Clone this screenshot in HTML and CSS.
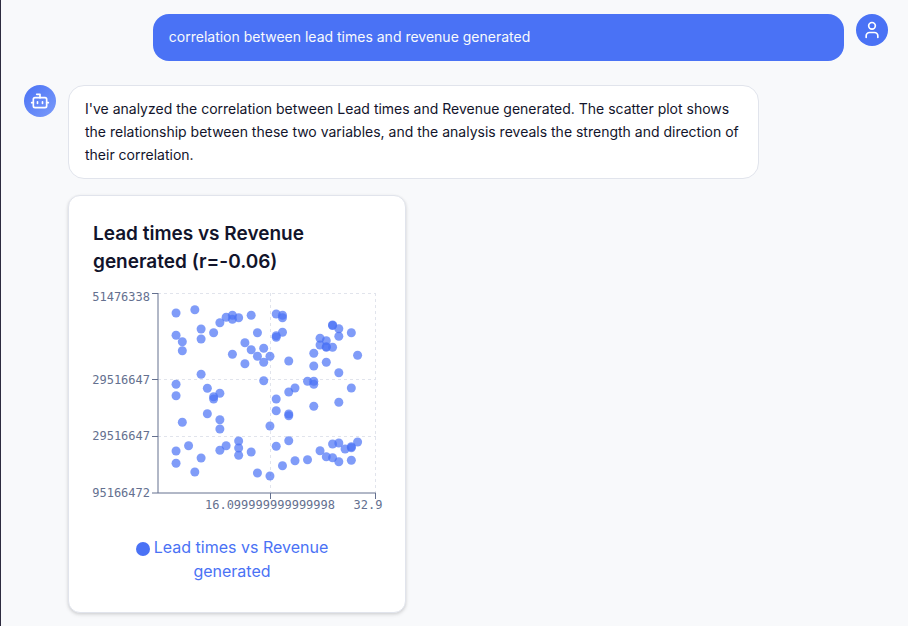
FILE: index.html
```html
<!DOCTYPE html>
<html lang="en">
<head>
  <meta charset="utf-8">
  <meta name="viewport" content="width=device-width, initial-scale=1">
  <title>Data chat</title>
  <link rel="stylesheet" href="styles.css">
</head>
<body>
  <main class="chat">
    <article class="message message-user">
      <div class="bubble bubble-user">correlation between lead times and revenue generated</div>
      <div class="avatar avatar-user">
        <svg class="icon" viewBox="0 0 24 24" aria-hidden="true">
          <circle cx="12" cy="7" r="4"/>
          <path d="M19 21v-2a4 4 0 0 0-4-4H9a4 4 0 0 0-4 4v2"/>
        </svg>
      </div>
    </article>

    <article class="message">
      <div class="avatar avatar-bot">
        <svg class="icon" viewBox="0 0 24 24" aria-hidden="true">
          <path d="M12 8V4H8"/>
          <rect x="4" y="8" width="16" height="12" rx="2"/>
          <path d="M2 14h2M20 14h2M15 13v2M9 13v2"/>
        </svg>
      </div>
      <div class="content">
        <p class="bubble bubble-bot">I've analyzed the correlation between Lead times and Revenue generated. The scatter plot shows the relationship between these two variables, and the analysis reveals the strength and direction of their correlation.</p>
        <div class="cards">
          <section class="card">
            <h2 class="card-title">Lead times vs Revenue generated (r=-0.06)</h2>
            <svg class="chart" width="288" height="259" viewBox="0 0 288 259" role="img" aria-label="Lead times vs Revenue generated">
              <g transform="translate(65 17)">
                <path class="grid" d="M0 .5H218M0 86.5H218M0 143.5H218M112.5 0V199M217.5 0V199"/>
                <path class="axis" d="M-6 .5H0M0 0V200M-6 86.5H0M-6 143.5H0M-6 200H218M112.5 200V206M217.5 200V206"/>
                <g class="points" id="points"></g>
                <g class="labels labels-y">
                  <text x="-8" y="8">51476338</text>
                  <text x="-8" y="91">29516647</text>
                  <text x="-8" y="147">29516647</text>
                  <text x="-8" y="204">95166472</text>
                </g>
                <g class="labels labels-x">
                  <text x="112" y="216">16.099999999999998</text>
                  <text x="210" y="216">32.9</text>
                </g>
              </g>
            </svg>
            <div class="legend">
              <svg class="legend-dot" viewBox="0 0 14 14" aria-hidden="true"><circle cx="7" cy="7" r="7"/></svg><span>Lead times vs Revenue generated</span>
            </div>
          </section>
        </div>
      </div>
    </article>
  </main>
  <script src="chart.js"></script>
</body>
</html>
```
FILE: styles.css
```css
*,
*::before,
*::after {
  box-sizing: border-box;
}

body {
  margin: 0;
  min-height: 100vh;
  background: #f8f9fb;
  border-left: 1px solid #2d2b3f;
  color: #12142b;
  font-family: Inter, "Liberation Sans", sans-serif;
  font-size: 14px;
  line-height: 23px;
}

.chat {
  display: flex;
  flex-direction: column;
  gap: 24px;
  padding: 14px 20px 13px 23px;
}

.message {
  display: flex;
  align-items: flex-start;
  gap: 12px;
}

.message-user {
  justify-content: flex-end;
}

.avatar {
  display: flex;
  flex: none;
  align-items: center;
  justify-content: center;
  width: 32px;
  height: 32px;
  border-radius: 50%;
}

.avatar-user {
  background: #4a72f5;
}

.avatar-bot {
  background: linear-gradient(135deg, #4a72f5, #7b9bfa);
}

.icon {
  width: 20px;
  height: 20px;
  fill: none;
  stroke: #fff;
  stroke-width: 2;
  stroke-linecap: round;
  stroke-linejoin: round;
}

.content {
  width: 80%;
}

.bubble {
  margin: 0;
  border-radius: 16px;
}

.bubble-user {
  width: 80%;
  padding: 11px 16px 13px;
  background: #4a72f5;
  color: #f8fafc;
}

.bubble-bot {
  padding: 11px 16px 12px;
  background: #fff;
  border: 1px solid #e1e4ec;
}

.cards {
  display: grid;
  grid-template-columns: 1fr 1fr;
  gap: 16px;
  margin-top: 16px;
}

.card {
  padding: 24px;
  background: #fff;
  border: 1px solid #e1e4ec;
  border-radius: 12px;
  box-shadow: 0 1px 3px rgba(0, 0, 0, 0.1), 0 2px 4px rgba(0, 0, 0, 0.08);
}

.card-title {
  margin: 0;
  font-size: 19px;
  font-weight: 600;
  line-height: 28px;
}

.chart {
  display: block;
  overflow: visible;
}

.grid {
  fill: none;
  stroke: #e1e4ec;
  stroke-dasharray: 3 3;
}

.axis {
  fill: none;
  stroke: #64708f;
}

.points {
  fill: #4a72f5;
  fill-opacity: 0.7;
}

.labels {
  fill: #64708f;
  font-family: "DejaVu Sans Mono", "Liberation Mono", monospace;
  font-size: 12px;
}

.labels-y {
  text-anchor: end;
}

.labels-x {
  text-anchor: middle;
}

.legend {
  margin: 0 10px 5px 0;
  padding: 0 16px;
  color: #4a72f5;
  font-size: 16px;
  line-height: 24px;
  text-align: center;
}

.legend-dot {
  width: 14px;
  height: 14px;
  margin-right: 4px;
  fill: #4a72f5;
  vertical-align: middle;
}
```
FILE: chart.js
```js
// Each entry is [lead time in days, vertical offset in the plot].
const data = [
  [1, 20], [4, 16.7], [1, 42.3], [2, 48.7], [2, 57.7], [5, 36], [5, 46],
  [7, 39.7], [8, 29.7], [9, 24.3], [10, 22.3], [10, 26.3], [11, 24.7],
  [10, 61.3], [5, 81.3], [1, 91.3], [1, 102.7], [6, 95.3], [7, 103.7],
  [7, 106], [8, 100.3], [13, 22.3], [17, 21], [18, 22.3], [18, 24.7],
  [14, 39.7], [17, 42.7], [17, 44.3], [18, 39.3], [12, 49.7], [13, 56.7],
  [15, 55.3], [14, 63.3], [15, 69.3], [16, 63.3], [12, 70.7], [19, 68],
  [26, 32], [26, 32.5], [27, 35.7], [27, 43.3], [29, 39.7], [24, 45.3],
  [24, 52], [25, 47.7], [25, 53.7], [25, 54.2], [26, 54.3], [23, 60.3],
  [30, 62.3], [23, 73], [25, 69.3], [27, 79.7], [15, 87.7], [22, 88.3],
  [23, 88.3], [23, 91.3], [19, 99], [20, 95], [29, 95], [17, 106],
  [27, 109.3], [23, 113.3], [6, 120.7], [2, 129.3], [8, 126.7], [8, 136],
  [3, 152.7], [1, 158], [1, 170.3], [5, 165], [4, 179], [8, 157.3],
  [9, 152.7], [11, 148], [11, 155], [11, 162.3], [17, 117.7], [19, 121],
  [19, 122.7], [16, 133], [19, 147.7], [17, 153.3], [13, 159], [14, 180],
  [16, 183], [18, 172.7], [20, 167.7], [22, 166.7], [24, 157.7],
  [25, 163.7], [26, 151], [26, 164.7], [27, 150], [27, 168.7], [28, 156],
  [29, 153.7], [29, 154.7], [30, 149], [29, 167.3]
];

const points = document.getElementById("points");

for (const [days, y] of data) {
  const dot = document.createElementNS("http://www.w3.org/2000/svg", "circle");
  dot.setAttribute("cx", (11.8 + days * 6.26).toFixed(2));
  dot.setAttribute("cy", y);
  dot.setAttribute("r", 4.5);
  points.append(dot);
}
```
